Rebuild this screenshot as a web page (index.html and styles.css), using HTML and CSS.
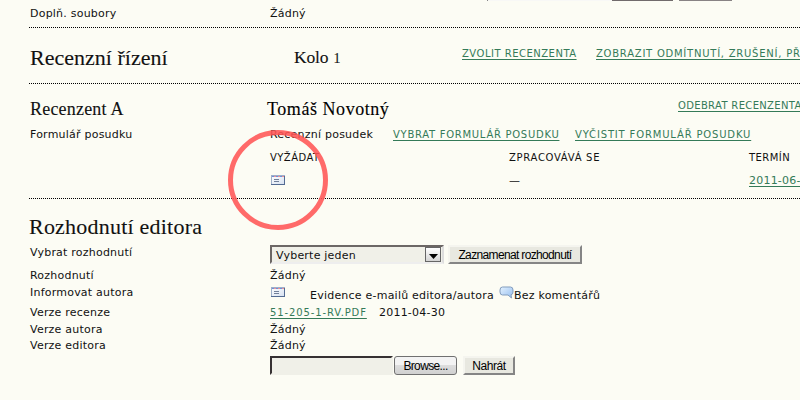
FILE: index.html
```
<!DOCTYPE html>
<html lang="cs">
<head>
<meta charset="utf-8">
<title>Recenzní řízení</title>
<link rel="stylesheet" href="styles.css">
</head>
<body>
<svg class="defs" width="0" height="0" aria-hidden="true">
  <defs>
    <linearGradient id="paper" x1="0" y1="0" x2="1" y2="1"><stop offset="0" stop-color="#fff"/><stop offset="1" stop-color="#d5e0f0"/></linearGradient>
    <linearGradient id="bubble" x1="0" y1="0" x2="1" y2="1"><stop offset="0" stop-color="#e4f2ff"/><stop offset="1" stop-color="#94bdef"/></linearGradient>
    <symbol id="mail" viewBox="0 0 14 10">
      <rect x=".5" y=".5" width="13" height="9" fill="url(#paper)" stroke="#9fb0ca"/>
      <path d="M0 9.5H14M13.5 1V10" stroke="#536b92"/>
      <path d="M1 1.5H13" stroke="#6f8fd8" stroke-dasharray="2 2"/>
      <path d="M3 1.5H13" stroke="#e98f94" stroke-dasharray="2 2"/>
      <path d="M3 4.5H8M3 6.5H8" stroke="#71809a"/>
    </symbol>
  </defs>
</svg>
<main class="page">
  <div class="row files">
    <span class="label">Doplň. soubory</span><span class="none">Žádný</span>
    <span class="edges"><i class="field"></i><i class="edge wide"></i><i class="edge"></i></span>
  </div>
  <section class="review">
    <h3>Recenzní řízení</h3>
    <h4>Kolo <span class="num">1</span></h4>
    <a class="action a-choose" href="#">ZVOLIT RECENZENTA</a>
    <a class="action a-show" href="#">ZOBRAZIT ODMÍTNUTÍ, ZRUŠENÍ, PŘ</a>
  </section>
  <section class="reviewer">
    <div class="row name"><h4 class="label">Recenzent A</h4><h4 class="person">Tomáš Novotný</h4><a class="action a-remove" href="#">ODEBRAT RECENZENTA</a></div>
    <div class="row form"><span class="label">Formulář posudku</span><span class="formname">Recenzní posudek</span><a class="action a-pick" href="#">VYBRAT FORMULÁŘ POSUDKU</a><a class="action a-clear" href="#">VYČISTIT FORMULÁŘ POSUDKU</a></div>
    <div class="dates heads"><span>VYŽÁDAT</span><span class="progress">ZPRACOVÁVÁ SE</span><span>TERMÍN</span></div>
    <div class="dates"><span><svg class="mail"><use href="#mail"/></svg></span><span>—</span><a href="#">2011-06-</a></div>
    <div class="circle"></div>
  </section>
  <section class="decision">
    <h3>Rozhodnutí editora</h3>
    <div class="row pick"><span class="label">Vybrat rozhodnutí</span>
      <span class="select">Vyberte jeden<span class="drop"><svg width="9" height="5"><path d="M0 0H9L4.500 5Z"/></svg></span></span>
      <button class="classic record"><span>Zaznamenat rozhodnutí</span></button></div>
    <div class="row r17"><span class="label">Rozhodnutí</span><span>Žádný</span></div>
    <div class="row inform"><span class="label">Informovat autora</span><svg class="mail"><use href="#mail"/></svg><span class="evidence">Evidence e-mailů editora/autora</span>
      <svg class="bubble" viewBox="0 0 15 13"><path d="M3.500 1H11.500Q14 1 14 4V6Q14 8.500 12 8.700L12.500 12L9 9H3.500Q1 9 1 6V4Q1 1 3.500 1Z" fill="url(#bubble)" stroke="#839dbd"/></svg><span class="nocomment">Bez komentářů</span></div>
    <div class="row r17"><span class="label">Verze recenze</span><a class="file" href="#">51-205-1-RV.PDF</a><span>2011-04-30</span></div>
    <div class="row r16"><span class="label">Verze autora</span><span>Žádný</span></div>
    <div class="row r16"><span class="label">Verze editora</span><span>Žádný</span></div>
    <div class="row upload"><span class="label"></span><span class="filebox"></span><button class="browse"><span>Browse...</span></button><button class="classic send"><span>Nahrát</span></button></div>
  </section>
</main>
</body>
</html>
```
FILE: styles.css
```
* { box-sizing: border-box; }
body { margin: 0; background: #fcfcf4; color: #111; font: 11px/16px "DejaVu Sans", Verdana, sans-serif; letter-spacing: .22px; }
.defs { position: absolute; }
.page { height: 400px; padding-left: 29px; overflow: hidden; white-space: nowrap; }
h3, h4 { margin: 0; font-family: "Liberation Serif", Georgia, serif; font-weight: 400; -webkit-text-stroke: .1px currentColor; }
h3 { font-size: 22px; letter-spacing: .02px; line-height: 26px; }
h4 { font-size: 18px; line-height: 22px; }
a { color: #347a58; text-decoration: underline; text-underline-offset: 2px; text-decoration-thickness: 1px; }
.row { display: flex; align-items: flex-start; padding-left: 1px; }
.row > *, .review > * { flex-shrink: 0; }
.label { flex: 0 0 240px; }
.action { font-size: 10px; letter-spacing: .5px; }
.files { height: 27px; padding-top: 6px; }
.none { width: 35px; }
.edges { display: flex; margin: -6px 0 0 182px; }
.field { width: 125px; height: 1px; border-left: 1px solid #888; background: #f8f8f6; }
.edge { width: 53px; height: 1px; background: #888384; }
.edge.wide { width: 61px; margin-right: 6px; background: #716b6c; }
.review { display: flex; height: 56px; border-top: 1px dotted #000; padding: 17px 0 0 1px; }
.review h3 { width: 264px; }
.review h4 { width: 168px; padding-top: 1px; font-size: 17.500px; letter-spacing: -.2px; }
.num { font-size: 14px; margin-left: 1px; }
.a-choose { width: 114px; margin: 1px 20px 0 0; }
.a-show { margin-top: 1px; letter-spacing: .76px; }
.reviewer { position: relative; height: 115px; border-top: 1px dotted #000; padding-top: 14px; }
.name { height: 29px; }
.name .label { flex-basis: 237px; letter-spacing: .2px; }
.person { width: 411px; color: #000; letter-spacing: .55px; }
.a-remove { letter-spacing: .34px; }
.form { height: 23px; }
.formname { width: 123px; }
.a-pick { width: 166px; margin-right: 16px; letter-spacing: .72px; }
.a-clear { letter-spacing: .84px; }
.dates { display: grid; grid-template-columns: 239px 240px 100px; margin-left: 241px; height: 23px; }
.dates a { justify-self: start; }
.heads { font-size: 10px; letter-spacing: .45px; }
.progress { letter-spacing: .7px; }
.mail { display: block; width: 14px; height: 10px; margin: 2px 0 0 1px; }
.circle { position: absolute; left: 199px; top: 46px; width: 100px; height: 100px; border: 5px solid rgba(255, 85, 85, .88); border-radius: 50%; z-index: 1; }
.decision { border-top: 1px dotted #000; padding-top: 15px; }
.decision h3 { height: 31px; letter-spacing: .22px; }
.pick { height: 23px; }
.select { display: flex; justify-content: space-between; width: 174px; height: 19px; padding: 0 1px 0 4px; line-height: 17px; background: #f0f0e8; border: 2px solid #6c6765; border-right-color: #ddd; border-bottom-color: #eee; }
.drop { display: flex; align-items: center; justify-content: center; width: 16px; height: 15px; border: 1px solid #666; background: linear-gradient(#fff, #d4d4d4); padding-top: 4px; }
.classic { display: flex; align-items: center; justify-content: center; height: 19px; padding: 0; border: 2px solid #f5f5ef; border-right-color: #858585; border-bottom-color: #858585; background: #e8e8e0; font: 12px "Liberation Sans", Arial, sans-serif; letter-spacing: -.4px; }
.record { width: 134px; margin: 0 0 0 4px; letter-spacing: -.65px; }
.r17 { height: 17px; }
.r16 { height: 16px; }
.inform { height: 20px; }
.inform .mail { margin-top: 2px; }
.evidence { width: 189px; margin: 3px 0 0 25px; }
.bubble { width: 15px; height: 13px; margin-top: 1px; }
.nocomment { margin-top: 3px; }
.file { width: 97px; margin-right: 12px; font-size: 10px; letter-spacing: .88px; }
.upload { padding-top: 2px; }
.filebox { width: 123px; height: 19px; background: #f0f0e8; border: 2px solid #363132; border-right-color: #f0f0e8; border-bottom-color: #f0f0e8; }
.browse { width: 63px; height: 19px; margin: 0 6px 0 1px; padding: 0; border: 1px solid #707070; border-radius: 3px; background: linear-gradient(#f3f3f3 48%, #ddd 50%, #d0d0d0); font: 12px "Liberation Sans", Arial, sans-serif; letter-spacing: -.65px; }
.send { width: 52px; }
```
